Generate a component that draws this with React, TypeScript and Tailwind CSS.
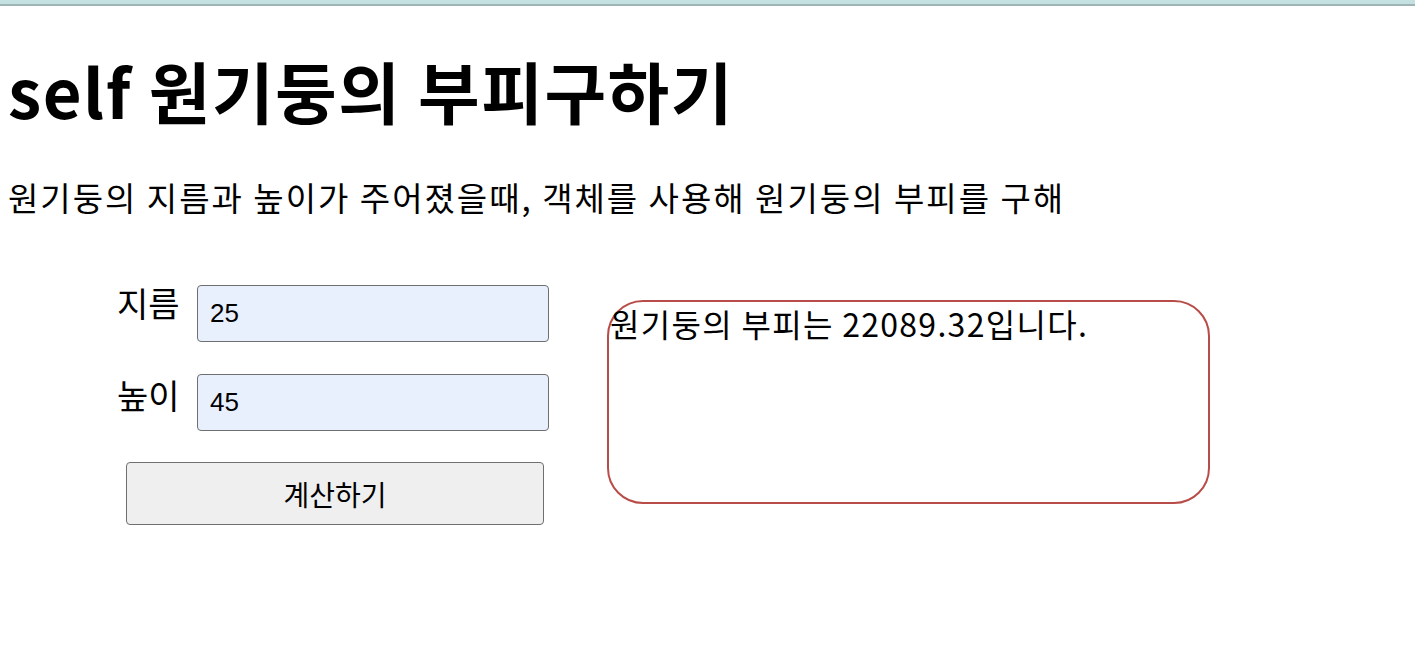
import React, { useState } from 'react';

const font = { fontFamily: '"Noto Sans CJK KR", "Noto Sans", sans-serif' };

function App() {
  const [diameter, setDiameter] = useState('25');
  const [height, setHeight] = useState('45');
  const [result, setResult] = useState('22089.32');

  const calc = () => {
    const r = parseFloat(diameter) / 2;
    const h = parseFloat(height);
    setResult((3.14 * r * r * h).toFixed(2));
  };

  return (
    <div className="min-h-screen bg-white text-black" style={font}>
      <div className="h-[4px] bg-[#c5e0e1]" />
      <div className="h-[2px] bg-[#9fb4b5]" />
      <div className="pl-[8px]">
        <h1 className="mt-[40px] text-[67px] font-bold leading-[88px] tracking-[1.5px]">self 원기둥의 부피구하기</h1>
        <p className="mt-[43px] text-[33px] leading-[40px] tracking-[2px]">원기둥의 지름과 높이가 주어졌을때, 객체를 사용해 원기둥의 부피를 구해</p>
        <div className="mt-[68px] flex items-start">
          <div className="ml-[109px] flex flex-col">
            <div className="flex items-start">
              <label className="w-[80px] text-[34px] leading-[40px] -mt-[2px]">지름</label>
              <input
                value={diameter}
                onChange={(e) => setDiameter(e.target.value)}
                className="h-[57px] w-[352px] rounded-[4px] border border-[#6f6f6f] bg-[#e8f0fe] px-[12px] text-[26px] outline-none"
                style={{ fontFamily: '"Liberation Sans", Arial, sans-serif' }}
              />
            </div>
            <div className="mt-[32px] flex items-start">
              <label className="w-[80px] text-[34px] leading-[40px] mt-[1px]">높이</label>
              <input
                value={height}
                onChange={(e) => setHeight(e.target.value)}
                className="h-[57px] w-[352px] rounded-[4px] border border-[#6f6f6f] bg-[#e8f0fe] px-[12px] text-[26px] outline-none"
                style={{ fontFamily: '"Liberation Sans", Arial, sans-serif' }}
              />
            </div>
            <button
              onClick={calc}
              className="ml-[9px] mt-[31px] h-[63px] w-[418px] rounded-[4px] border border-[#6f6f6f] bg-[#efefef] text-[28px]"
            >
              계산하기
            </button>
          </div>
          <div className="ml-[58px] mt-[15px] h-[204px] w-[603px] rounded-[36px] border-2 border-[#b84c48] px-[1px] text-[32px] leading-[42px] tracking-[1.3px]">
            원기둥의 부피는 {result}입니다.
          </div>
        </div>
      </div>
    </div>
  );
}

export default App;
